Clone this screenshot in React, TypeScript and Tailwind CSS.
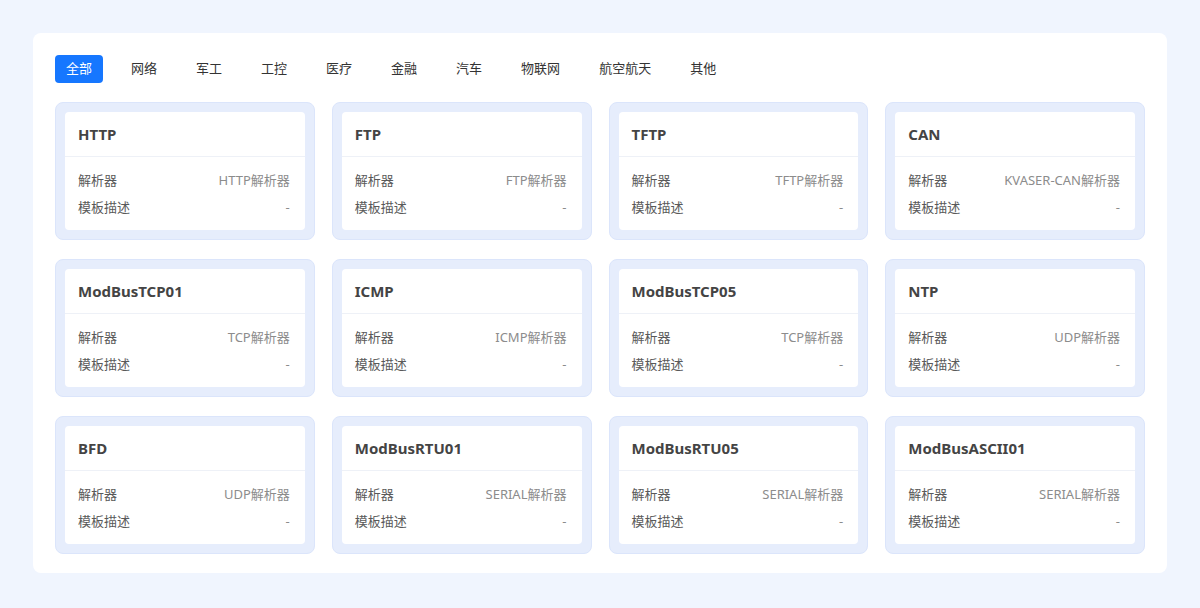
import React from "react";

const tabs = ["全部", "网络", "军工", "工控", "医疗", "金融", "汽车", "物联网", "航空航天", "其他"];

const cards = [
  { name: "HTTP", parser: "HTTP解析器" },
  { name: "FTP", parser: "FTP解析器" },
  { name: "TFTP", parser: "TFTP解析器" },
  { name: "CAN", parser: "KVASER-CAN解析器" },
  { name: "ModBusTCP01", parser: "TCP解析器" },
  { name: "ICMP", parser: "ICMP解析器" },
  { name: "ModBusTCP05", parser: "TCP解析器" },
  { name: "NTP", parser: "UDP解析器" },
  { name: "BFD", parser: "UDP解析器" },
  { name: "ModBusRTU01", parser: "SERIAL解析器" },
  { name: "ModBusRTU05", parser: "SERIAL解析器" },
  { name: "ModBusASCII01", parser: "SERIAL解析器" },
];

export default function App() {
  return (
    <div
      className="w-[1200px] h-[608px] bg-[#f0f5fe] p-[33px]"
      style={{ fontFamily: '"Noto Sans", "Noto Sans CJK SC", sans-serif' }}
    >
      <div className="bg-white rounded-[8px] h-[540px] pt-[22px] px-[22px] pb-[20px] flex flex-col">
        <div className="flex items-center gap-[17px] h-[28px]">
          {tabs.map((t, i) => (
            <div
              key={t}
              className={
                i === 0
                  ? "h-[28px] px-[11px] flex items-center rounded-[4px] bg-[#1677ff] text-white text-[13px]"
                  : "h-[28px] px-[11px] flex items-center rounded-[4px] text-[#333333] text-[13px]"
              }
            >
              {t}
            </div>
          ))}
        </div>
        <div className="mt-[19px] grid grid-cols-4 gap-x-[17px] gap-y-[19px]">
          {cards.map((c) => (
            <div
              key={c.name}
              className="h-[138px] rounded-[8px] border border-[#dbe5fb] bg-[#e6edfc] p-[9px]"
            >
              <div className="h-full rounded-[4px] bg-white flex flex-col">
                <div className="h-[45px] shrink-0 flex items-center pl-[13px] pr-[15px] border-b border-[#eef1f7]">
                  <span className="text-[15px] font-bold text-[#444444]">{c.name}</span>
                </div>
                <div className="pl-[13px] pr-[15px] pt-[10px]">
                  <div className="h-[27px] flex items-center justify-between text-[13px]">
                    <span className="text-[#595959]">解析器</span>
                    <span className="text-[#8c8c8c]">{c.parser}</span>
                  </div>
                  <div className="h-[27px] flex items-center justify-between text-[13px]">
                    <span className="text-[#595959]">模板描述</span>
                    <span className="text-[#8c8c8c]">-</span>
                  </div>
                </div>
              </div>
            </div>
          ))}
        </div>
      </div>
    </div>
  );
}
